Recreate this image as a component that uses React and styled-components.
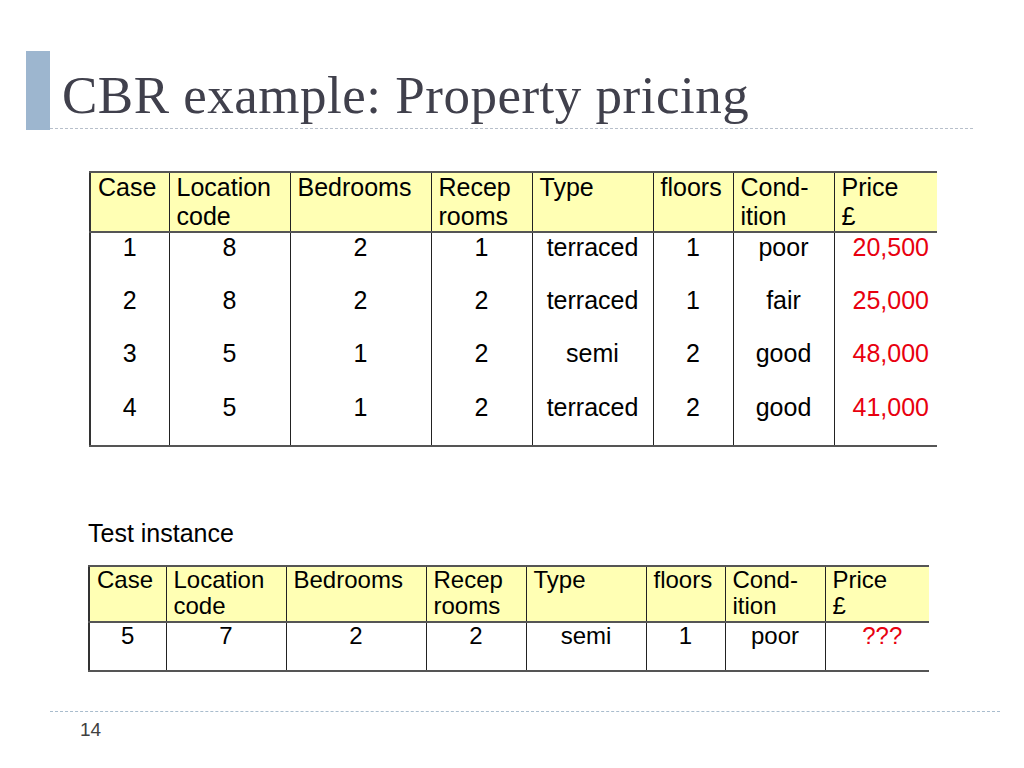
import React from "react";
import styled, { createGlobalStyle } from "styled-components";

const Global = createGlobalStyle`
  html, body { margin: 0; padding: 0; background: #fff; }
  body { font-family: "Liberation Sans", Arial, sans-serif; }
`;

const Page = styled.div`
  width: 1024px;
  height: 768px;
  overflow: hidden;
  background: #fff;
  display: flex;
  flex-direction: column;
`;

const Header = styled.header`
  margin-top: 51px;
  padding-left: 26px;
  display: flex;
  align-items: flex-start;
`;

const Bar = styled.div`
  width: 24px;
  height: 79px;
  background: #9db6cf;
`;

const TitleBox = styled.div`
  width: 923px;
  height: 78px;
  padding: 18px 0 0 12px;
  box-sizing: border-box;
  border-bottom: 1px dashed #b7bfca;
`;

const Title = styled.h1`
  margin: 0;
  font-family: "Liberation Serif", "Times New Roman", serif;
  font-weight: normal;
  font-size: 53px;
  line-height: 53px;
  letter-spacing: 0.5px;
  color: #40404c;
  white-space: nowrap;
`;

const Table = styled.table`
  width: ${(p) => p.$width}px;
  margin-left: ${(p) => p.$left}px;
  margin-top: ${(p) => p.$top}px;
  border-collapse: collapse;
  table-layout: fixed;
  font-size: ${(p) => p.$fs}px;
  line-height: ${(p) => p.$lh}px;
  color: #000;
`;

const Col = styled.col`
  width: ${(p) => p.$w}px;
`;

const HeadCell = styled.th`
  background: #ffffb4;
  font-weight: normal;
  text-align: left;
  vertical-align: top;
  padding: 0 0 0 7px;
  height: ${(p) => p.$h}px;
  box-sizing: border-box;
  border-top: 2px solid #555;
  border-bottom: 2px solid #555;
  border-left: ${(p) => (p.$first ? "2px solid #333" : "1px solid #222")};
  white-space: nowrap;
  overflow: hidden;
`;

const Cell = styled.td`
  text-align: center;
  vertical-align: top;
  padding: 0;
  height: ${(p) => p.$h}px;
  box-sizing: border-box;
  border-left: ${(p) => (p.$first ? "2px solid #333" : "1px solid #222")};
  border-bottom: ${(p) => (p.$last ? "2px solid #555" : "none")};
  color: ${(p) => (p.$price ? "#e8000f" : "#000")};
  padding-left: ${(p) => (p.$price ? "10px" : "0")};
  white-space: nowrap;
`;

const Caption = styled.div`
  margin: ${(p) => p.$top}px 0 0 88px;
  font-size: 25px;
  line-height: 29px;
  color: #000;
`;

const Footer = styled.footer`
  margin: auto 0 0 50px;
  width: 950px;
  height: 57px;
  box-sizing: border-box;
  border-top: 1px dashed #a9bccd;
  padding: 8px 0 0 30px;
  font-size: 19px;
  line-height: 20px;
  color: #404040;
`;

const headers = [
  ["Case"],
  ["Location", "code"],
  ["Bedrooms"],
  ["Recep", "rooms"],
  ["Type"],
  ["floors"],
  ["Cond-", "ition"],
  ["Price", "£"],
];

const cases = [
  ["1", "8", "2", "1", "terraced", "1", "poor", "20,500"],
  ["2", "8", "2", "2", "terraced", "1", "fair", "25,000"],
  ["3", "5", "1", "2", "semi", "2", "good", "48,000"],
  ["4", "5", "1", "2", "terraced", "2", "good", "41,000"],
];

const test = [["5", "7", "2", "2", "semi", "1", "poor", "???"]];

function DataTable({ widths, rows, left, top, fs, lh, headH, rowH }) {
  const total = widths.reduce((a, b) => a + b, 0);
  return (
    <Table $left={left} $top={top} $fs={fs} $lh={lh} $width={total}>
      <colgroup>
        {widths.map((w, i) => (
          <Col key={i} $w={w} />
        ))}
      </colgroup>
      <thead>
        <tr>
          {headers.map((h, i) => (
            <HeadCell key={i} $first={i === 0} $h={headH}>
              {h.map((line, j) => (
                <React.Fragment key={j}>
                  {j > 0 && <br />}
                  {line}
                </React.Fragment>
              ))}
            </HeadCell>
          ))}
        </tr>
      </thead>
      <tbody>
        {rows.map((r, ri) => (
          <tr key={ri}>
            {r.map((v, ci) => (
              <Cell
                key={ci}
                $first={ci === 0}
                $last={ri === rows.length - 1}
                $price={ci === 7}
                $h={rowH}
              >
                {v}
              </Cell>
            ))}
          </tr>
        ))}
      </tbody>
    </Table>
  );
}

export default function App() {
  return (
    <>
      <Global />
      <Page>
        <Header>
          <Bar />
          <TitleBox>
            <Title>CBR example: Property pricing</Title>
          </TitleBox>
        </Header>
        <DataTable
          widths={[79, 121, 141, 101, 121, 80, 101, 103]}
          rows={cases}
          left={89}
          top={41}
          fs={25}
          lh={29}
          headH={59}
          rowH={53.5}
        />
        <Caption $top={72}>Test instance</Caption>
        <DataTable
          widths={[77, 120, 140, 100, 120, 79, 100, 104]}
          rows={test}
          left={88}
          top={17}
          fs={24}
          lh={26}
          headH={56}
          rowH={49}
        />
        <Footer>14</Footer>
      </Page>
    </>
  );
}
